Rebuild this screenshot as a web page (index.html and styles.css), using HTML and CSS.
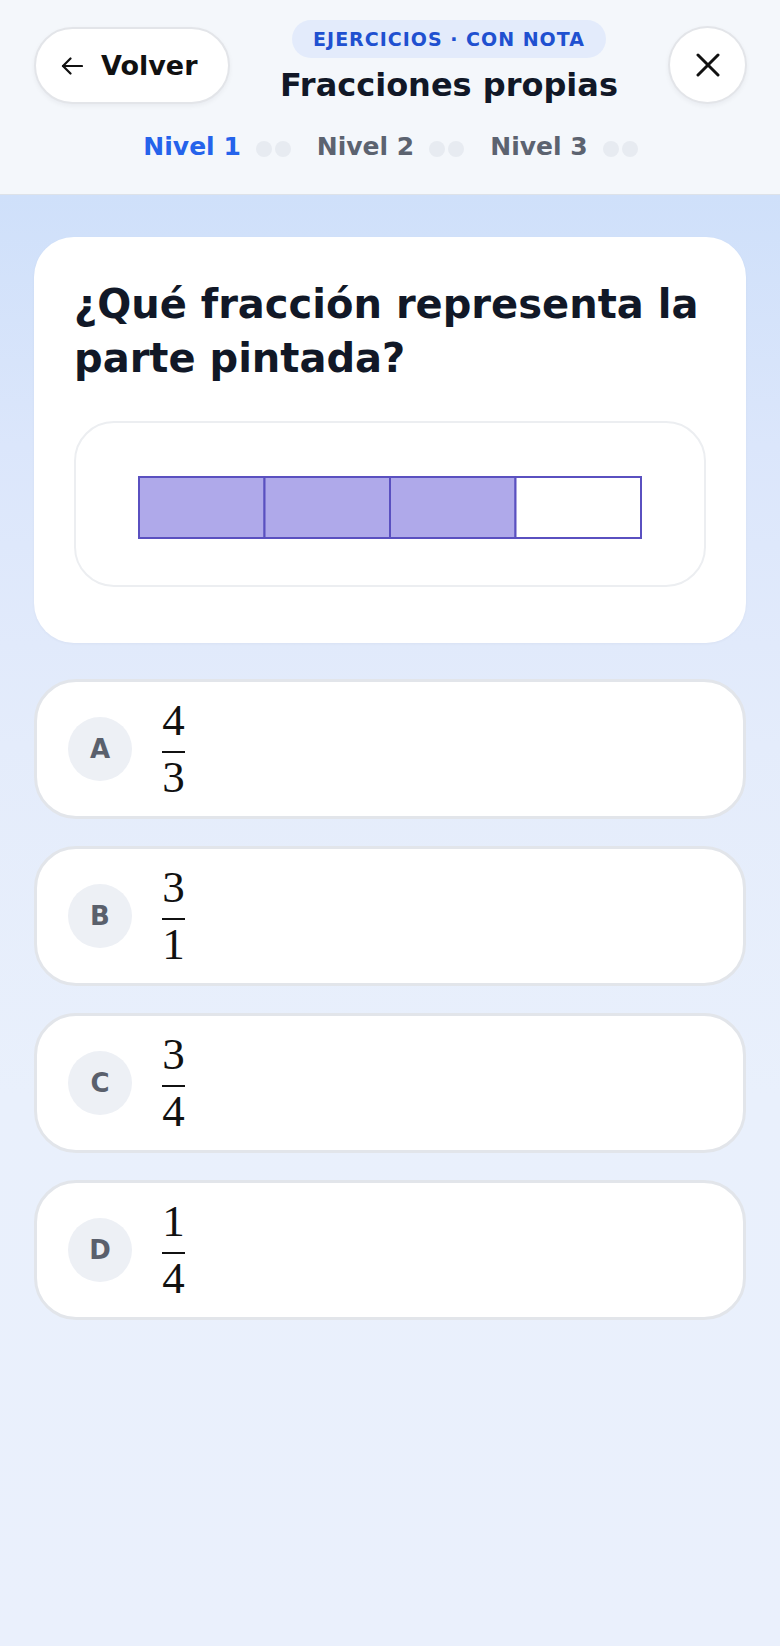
FILE: index.html
```html
<!DOCTYPE html>
<html lang="es">
<head>
<meta charset="utf-8">
<title>Fracciones propias</title>
<link rel="stylesheet" href="styles.css">
</head>
<body>
<header class="topbar">
  <div class="toprow">
    <button class="back-btn">
      <svg class="back-ico" width="22" height="18" viewBox="0 0 22 18" fill="none" stroke="#111" stroke-width="2.2" stroke-linecap="round" stroke-linejoin="round"><path d="M21 9H2"/><path d="M9.5 1.5L2 9l7.5 7.5"/></svg>
      <span>Volver</span>
    </button>
    <div class="center">
      <div class="badge">EJERCICIOS · CON NOTA</div>
      <h1 class="title">Fracciones propias</h1>
    </div>
    <button class="close-btn">
      <svg width="24" height="24" viewBox="0 0 24 24" fill="none" stroke="#111" stroke-width="3" stroke-linecap="round"><path d="M2 2L22 22"/><path d="M22 2L2 22"/></svg>
    </button>
  </div>
  <nav class="levels">
    <div class="level active"><span>Nivel 1</span><span class="dots"><i></i><i></i></span></div>
    <div class="level"><span>Nivel 2</span><span class="dots"><i></i><i></i></span></div>
    <div class="level"><span>Nivel 3</span><span class="dots"><i></i><i></i></span></div>
  </nav>
</header>
<main class="main">
  <section class="qcard">
    <h2 class="qtext">¿Qué fracción representa la parte pintada?</h2>
    <div class="figure">
      <svg width="504" height="63" viewBox="0 0 504 63">
        <rect x="1" y="1" width="125.5" height="61" fill="#afa9ea" stroke="#5a50c0" stroke-width="2"/>
        <rect x="126.5" y="1" width="125.5" height="61" fill="#afa9ea" stroke="#5a50c0" stroke-width="2"/>
        <rect x="252" y="1" width="125.5" height="61" fill="#afa9ea" stroke="#5a50c0" stroke-width="2"/>
        <rect x="377.5" y="1" width="125.5" height="61" fill="#ffffff" stroke="#5a50c0" stroke-width="2"/>
      </svg>
    </div>
  </section>
  <div class="options">
    <button class="option"><span class="letter">A</span><span class="frac"><span class="num">4</span><span class="bar"></span><span class="den">3</span></span></button>
    <button class="option"><span class="letter">B</span><span class="frac"><span class="num">3</span><span class="bar"></span><span class="den">1</span></span></button>
    <button class="option"><span class="letter">C</span><span class="frac"><span class="num">3</span><span class="bar"></span><span class="den">4</span></span></button>
    <button class="option"><span class="letter">D</span><span class="frac"><span class="num">1</span><span class="bar"></span><span class="den">4</span></span></button>
  </div>
</main>
</body>
</html>
```

FILE: styles.css
```css
* { box-sizing: border-box; }
html, body { margin: 0; padding: 0; }
body {
  font-family: "DejaVu Sans", "Noto Sans", sans-serif;
  background: #eaf0fc;
  color: #111827;
  width: 780px;
  min-height: 1646px;
}
button { font-family: inherit; cursor: pointer; }

.topbar {
  background: #f4f7fb;
  border-bottom: 1px solid #dde2e9;
  padding: 20px 33px 32px 34px;
}
.toprow {
  display: flex;
  align-items: flex-end;
}
.back-btn {
  display: flex;
  align-items: center;
  gap: 18px;
  height: 77px;
  width: 196px;
  padding: 0 0 0 25px;
  background: #fff;
  border: 2px solid #e3e5e9;
  border-radius: 40px;
  box-shadow: 0 2px 5px rgba(15, 23, 42, 0.05);
  font-size: 27px;
  font-weight: bold;
  color: #111;
}
.back-ico { display: block; }
.center {
  flex: 1;
  display: flex;
  flex-direction: column;
  align-items: center;
}
.badge {
  height: 38px;
  padding: 0 21px;
  display: flex;
  align-items: center;
  background: #e3ebfb;
  color: #2050d0;
  border-radius: 19px;
  font-size: 19px;
  font-weight: bold;
  letter-spacing: 1px;
}
.title {
  margin: 8px 0 0;
  font-size: 32px;
  line-height: 38px;
  font-weight: bold;
  color: #111827;
}
.close-btn {
  width: 79px;
  height: 78px;
  border-radius: 50%;
  background: #fff;
  border: 2px solid #e3e5e9;
  box-shadow: 0 2px 5px rgba(15, 23, 42, 0.05);
  display: flex;
  align-items: center;
  justify-content: center;
  padding: 0;
}
.levels {
  margin-top: 28px;
  display: flex;
  justify-content: center;
  gap: 26px;
}
.level {
  display: flex;
  align-items: center;
  gap: 15px;
  font-size: 25px;
  line-height: 30px;
  font-weight: bold;
  color: #5c6370;
}
.level.active { color: #2563eb; }
.dots { display: flex; gap: 3px; padding-top: 4px; }
.dots i {
  display: block;
  width: 16px;
  height: 16px;
  border-radius: 50%;
  background: #e7ebf1;
}

.main {
  padding: 42px 34px 60px;
  min-height: 1451px;
  background: linear-gradient(180deg, #cfe0fa 0px, #dbe6fb 250px, #e4ecfb 550px, #e9f0fc 900px, #eaf0fc 100%);
}
.qcard {
  background: #fff;
  border-radius: 40px;
  padding: 40px 40px 56px;
  box-shadow: 0 1px 3px rgba(15, 23, 42, 0.04);
}
.qtext {
  margin: 0 0 36px;
  font-size: 40px;
  line-height: 54px;
  font-weight: bold;
  color: #111827;
}
.figure {
  border: 2px solid #eceef1;
  border-radius: 40px;
  padding: 53px 0 46px;
  display: flex;
  justify-content: center;
}
.figure svg { display: block; }

.options {
  margin-top: 36px;
  display: flex;
  flex-direction: column;
  gap: 27px;
}
.option {
  height: 140px;
  width: 100%;
  background: #fff;
  border: 3px solid #e2e5ea;
  border-radius: 42px;
  display: flex;
  align-items: center;
  gap: 30px;
  padding: 0 0 0 31px;
  text-align: left;
}
.letter {
  width: 64px;
  height: 64px;
  border-radius: 50%;
  background: #edf0f5;
  color: #5a606c;
  font-size: 26px;
  font-weight: bold;
  display: flex;
  align-items: center;
  justify-content: center;
}
.frac {
  display: flex;
  flex-direction: column;
  align-items: center;
  font-family: "Liberation Serif", "Times New Roman", serif;
  font-weight: normal;
  font-size: 45px;
  color: #111;
}
.num, .den { line-height: 45px; display: block; }
.bar {
  display: block;
  width: 23px;
  height: 2px;
  background: #111;
  margin: 8px 0 2px;
}
```
